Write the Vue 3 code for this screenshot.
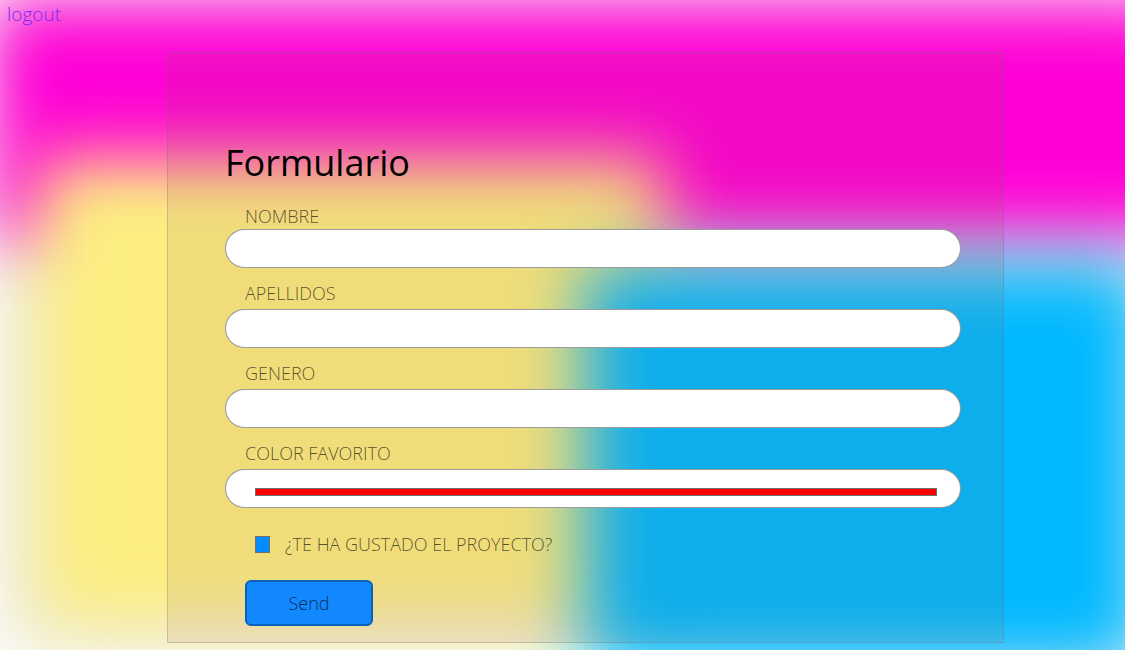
<script setup>
import { ref } from 'vue'

const fields = [
  { id: 'nombre', label: 'NOMBRE', type: 'text' },
  { id: 'apellidos', label: 'APELLIDOS', type: 'text' },
  { id: 'genero', label: 'GENERO', type: 'text' },
  { id: 'color', label: 'COLOR FAVORITO', type: 'color' }
]
const values = ref({ nombre: '', apellidos: '', genero: '', color: '#ff0000' })
const liked = ref(true)
</script>

<template>
  <div class="page">
    <div class="backdrop" aria-hidden="true">
      <div class="blob base"></div>
      <div class="blob magenta"></div>
      <div class="blob yellow"></div>
      <div class="blob blue"></div>
    </div>
    <header class="top"><a href="#" class="logout">logout</a></header>
    <form class="panel" @submit.prevent>
      <h1>Formulario</h1>
      <div v-for="f in fields" :key="f.id" class="field">
        <label :for="f.id">{{ f.label }}</label>
        <input :id="f.id" v-model="values[f.id]" :type="f.type" class="control" />
      </div>
      <div class="check">
        <input id="liked" v-model="liked" type="checkbox" />
        <label for="liked">¿TE HA GUSTADO EL PROYECTO?</label>
      </div>
      <button type="submit">Send</button>
    </form>
  </div>
</template>

<style>
body {
  background: #fff;
}
</style>

<style scoped>
.page {
  position: relative;
  min-height: 100vh;
  overflow: hidden;
  box-sizing: border-box;
  font-family: "Open Sans", "Noto Sans", sans-serif;
  font-weight: 300;
  font-size: 18px;
  line-height: 28px;
}
.backdrop {
  position: absolute;
  inset: 0;
  overflow: hidden;
}
.blob {
  position: absolute;
  filter: blur(34px);
}
.base {
  inset: 0;
  background: #eceae0;
}
.magenta {
  left: -10px;
  right: -80px;
  top: 0;
  height: 238px;
  background: #ff00d6;
}
.yellow {
  left: 36px;
  right: 41%;
  top: 158px;
  bottom: 24px;
  background: #fcee80;
}
.blue {
  left: 52%;
  right: -20px;
  top: 264px;
  bottom: -18px;
  background: #00b8ff;
}
.top {
  position: relative;
  height: 52px;
  padding-left: 7px;
  font-size: 19px;
}
.logout {
  color: #7a2af0;
  text-decoration: none;
}
.panel {
  position: relative;
  box-sizing: border-box;
  margin: 0 121px 7px 167px;
  padding: 82px 42px 16px 57px;
  border: 1px solid rgba(112, 112, 112, 0.3);
  background: rgba(140, 74, 72, 0.1);
}
h1 {
  margin: 0 0 12px;
  font-size: 36px;
  line-height: 56px;
  font-weight: 400;
  color: #000;
}
.field {
  display: flex;
  flex-direction: column;
  gap: 2px;
  margin-bottom: 11px;
}
.field label {
  align-self: flex-start;
  padding-left: 20px;
}
.field:first-of-type {
  gap: 0;
  line-height: 26px;
}
label {
  color: rgba(0, 0, 0, 0.65);
}
.control {
  box-sizing: border-box;
  width: 100%;
  height: 39px;
  margin: 0;
  padding: 0 20px;
  border: 1px solid rgba(112, 112, 112, 0.7);
  border-radius: 20px;
  background: #fff;
  font: inherit;
  outline: none;
}
.control[type="color"] {
  appearance: none;
  padding: 18px 23px 11px 29px;
}
.control[type="color"]::-webkit-color-swatch-wrapper {
  padding: 0;
}
.control[type="color"]::-webkit-color-swatch {
  border: 1px solid #707070;
  border-radius: 0;
}
.check {
  display: flex;
  align-items: center;
  gap: 15px;
  margin: 22px 0 22px 30px;
}
.check input {
  appearance: none;
  box-sizing: border-box;
  width: 15px;
  height: 17px;
  margin: 0;
  border: 1px solid #707070;
  background: #fff;
}
.check input:checked {
  background: #008bff;
}
button {
  display: block;
  box-sizing: border-box;
  width: 128px;
  height: 46px;
  margin: 0 0 0 20px;
  padding: 0;
  border: 2px solid #0b61b8;
  border-radius: 6px;
  background: #1288ff;
  color: rgba(0, 0, 0, 0.7);
  font: inherit;
}
</style>
